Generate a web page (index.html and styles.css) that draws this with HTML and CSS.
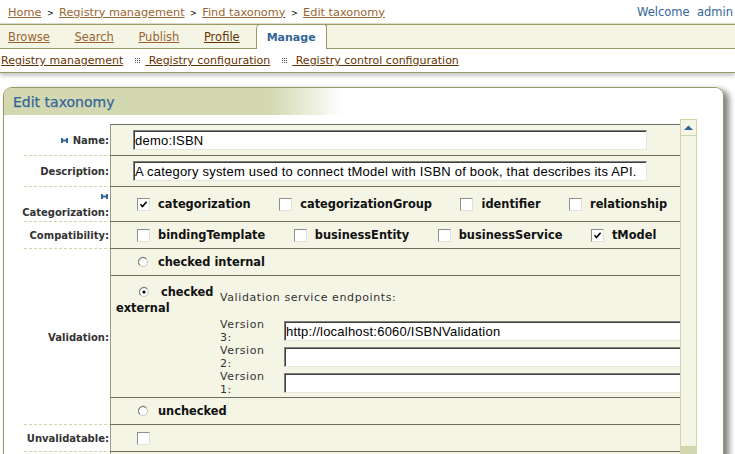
FILE: index.html
```html
<!DOCTYPE html>
<html>
<head>
<meta charset="utf-8">
<title>Edit taxonomy</title>
<link rel="stylesheet" href="styles.css">
</head>
<body>
<div class="top">
  <nav class="crumbs">
    <a href="#">Home</a><span class="sep">&gt;</span><a href="#">Registry management</a><span class="sep">&gt;</span><a href="#">Find taxonomy</a><span class="sep">&gt;</span><a href="#">Edit taxonomy</a>
  </nav>
  <div class="welcome">Welcome&nbsp; admin</div>
</div>

<div class="tabs">
  <a class="tab" href="#">Browse</a>
  <a class="tab" href="#">Search</a>
  <a class="tab" href="#">Publish</a>
  <a class="tab visited" href="#">Profile</a>
  <span class="tab active">Manage</span>
</div>

<div class="subnav">
  <a href="#">Registry management</a>
  <span class="grip"><svg width="5" height="5" viewBox="0 0 5 5"><g fill="#555"><rect x="0" y="0" width="1" height="1"/><rect x="2" y="0" width="1" height="1"/><rect x="4" y="0" width="1" height="1"/><rect x="0" y="2" width="1" height="1"/><rect x="2" y="2" width="1" height="1"/><rect x="4" y="2" width="1" height="1"/><rect x="0" y="4" width="1" height="1"/><rect x="2" y="4" width="1" height="1"/><rect x="4" y="4" width="1" height="1"/></g></svg></span>
  <a href="#">&nbsp;Registry configuration</a>
  <span class="grip"><svg width="5" height="5" viewBox="0 0 5 5"><g fill="#555"><rect x="0" y="0" width="1" height="1"/><rect x="2" y="0" width="1" height="1"/><rect x="4" y="0" width="1" height="1"/><rect x="0" y="2" width="1" height="1"/><rect x="2" y="2" width="1" height="1"/><rect x="4" y="2" width="1" height="1"/><rect x="0" y="4" width="1" height="1"/><rect x="2" y="4" width="1" height="1"/><rect x="4" y="4" width="1" height="1"/></g></svg></span>
  <a href="#">&nbsp;Registry control configuration</a>
</div>

<div class="panel">
  <div class="panel-head">Edit taxonomy</div>
  <div class="panel-body">
    <div class="scroll">
      <div class="form">
        <div class="lbl r1"><svg class="req" width="7" height="5" viewBox="0 0 7 5"><g fill="#336699"><rect x="0" y="0" width="2" height="5"/><rect x="5" y="0" width="2" height="5"/><rect x="0" y="1.5" width="7" height="2"/></g></svg>Name:</div>
        <div class="val r1 first"><input class="inp wide" type="text" value="demo:ISBN"></div>

        <div class="lbl r2">Description:</div>
        <div class="val r2"><input class="inp wide" type="text" value="A category system used to connect tModel with ISBN of book, that describes its API."></div>

        <div class="lbl r3 stack"><span class="req-line"><svg class="req" width="7" height="5" viewBox="0 0 7 5"><g fill="#336699"><rect x="0" y="0" width="2" height="5"/><rect x="5" y="0" width="2" height="5"/><rect x="0" y="1.5" width="7" height="2"/></g></svg></span><span>Categorization:</span></div>
        <div class="val r3 opts">
          <span class="opt"><span class="cb"><svg width="11" height="11" viewBox="0 0 11 11"><path d="M2.5 5.2 L4.5 7.5 L8.6 2.8" fill="none" stroke="#000" stroke-width="1.6"/></svg></span>categorization</span>
          <span class="opt"><span class="cb"></span>categorizationGroup</span>
          <span class="opt"><span class="cb"></span>identifier</span>
          <span class="opt"><span class="cb"></span>relationship</span>
        </div>

        <div class="lbl r4">Compatibility:</div>
        <div class="val r4 opts">
          <span class="opt"><span class="cb"></span>bindingTemplate</span>
          <span class="opt"><span class="cb"></span>businessEntity</span>
          <span class="opt"><span class="cb"></span>businessService</span>
          <span class="opt"><span class="cb"><svg width="11" height="11" viewBox="0 0 11 11"><path d="M2.5 5.2 L4.5 7.5 L8.6 2.8" fill="none" stroke="#000" stroke-width="1.6"/></svg></span>tModel</span>
        </div>

        <div class="lbl r5-7">Validation:</div>
        <div class="val r5 radios">
          <span class="opt"><svg class="radio" width="12" height="12" viewBox="0 0 12 12"><circle cx="6" cy="6" r="4.5" fill="#fff" stroke="#c4c4bc"/><path d="M2.8 9.2 A4.5 4.5 0 0 1 9.2 2.8" fill="none" stroke="#7c7c7c" stroke-width="1.2"/></svg>checked internal</span>
        </div>
        <div class="val r6 ext">
          <div class="ext-opt"><svg class="radio inl" width="12" height="12" viewBox="0 0 12 12"><circle cx="6" cy="6" r="4.5" fill="#fff" stroke="#c4c4bc"/><path d="M2.8 9.2 A4.5 4.5 0 0 1 9.2 2.8" fill="none" stroke="#7c7c7c" stroke-width="1.2"/><circle cx="6" cy="6" r="1.6" fill="#000"/></svg>checked external</div>
          <div class="endpoints">
            <div class="ep-title">Validation service endpoints:</div>
            <div class="ep-grid">
              <span class="ep-lbl">Version 3:</span><input class="inp ep" type="text" value="http://localhost:6060/ISBNValidation">
              <span class="ep-lbl">Version 2:</span><input class="inp ep" type="text" value="">
              <span class="ep-lbl">Version 1:</span><input class="inp ep" type="text" value="">
            </div>
          </div>
        </div>
        <div class="val r7 radios">
          <span class="opt"><svg class="radio" width="12" height="12" viewBox="0 0 12 12"><circle cx="6" cy="6" r="4.5" fill="#fff" stroke="#c4c4bc"/><path d="M2.8 9.2 A4.5 4.5 0 0 1 9.2 2.8" fill="none" stroke="#7c7c7c" stroke-width="1.2"/></svg>unchecked</span>
        </div>

        <div class="lbl r8">Unvalidatable:</div>
        <div class="val r8 opts"><span class="cb"></span></div>

        <div class="lbl r9"></div>
        <div class="val r9"></div>
      </div>
    </div>
    <div class="scrollbar">
      <div class="sb-up"><svg width="9" height="5" viewBox="0 0 9 5"><path d="M0 5 L4.5 0.5 L9 5 Z" fill="#336699"/></svg></div>
      <div class="sb-track"></div>
      <div class="sb-down"></div>
    </div>
  </div>
</div>
</body>
</html>
```

FILE: styles.css
```css
html, body {
  margin: 0;
  padding: 0;
  overflow: hidden;
  background: #fff;
}

body {
  width: 735px;
  height: 454px;
  font-family: "DejaVu Sans", Verdana, sans-serif;
  color: #000;
}

a {
  color: #996633;
  text-decoration: underline;
}

/* ---- top breadcrumb ---- */
.top {
  height: 24px;
  display: flex;
  justify-content: space-between;
  align-items: center;
  padding: 0 2px 0 8px;
  font-size: 11.3px;
}

.sep {
  color: #000;
  font-size: 8px;
  margin: 0 5.5px;
}

.welcome {
  font-size: 11.5px;
  color: #336699;
}

/* ---- tabs ---- */
.tabs {
  height: 23px;
  display: flex;
  align-items: stretch;
  gap: 24.5px;
  padding-left: 8px;
  background: #f5f5e6;
  border-top: 1px solid #999966;
  border-bottom: 1px solid #999966;
  box-shadow: 0 -1px 0 #dcdccc;
  font-size: 11.5px;
}

.tab {
  display: flex;
  align-items: center;
}

.tab.visited {
  color: #663300;
}

.tab.active {
  margin: -1px 0 -1px -8.5px;
  padding: 0 10px;
  background: #fff;
  border: 1px solid #999966;
  border-bottom: none;
  border-radius: 5px 3px 0 0;
  font-size: 11px;
  font-weight: bold;
  color: #336699;
}

/* ---- sub navigation ---- */
.subnav {
  height: 23px;
  display: flex;
  align-items: center;
  padding-left: 1px;
  font-size: 11px;
  border-bottom: 1px solid #999966;
  box-shadow: 0 3px 4px rgba(0, 0, 0, 0.22);
}

.subnav a {
  color: #663300;
}

.grip {
  display: inline-flex;
  margin: 0 5px 0 12px;
}

/* ---- panel ---- */
.panel {
  margin: 14px 0 0 3px;
  width: 721px;
  height: 380px;
  box-sizing: border-box;
  border: 1px solid #999966;
  border-bottom: none;
  border-radius: 9px 9px 0 0;
  box-shadow: 5px 3px 6px rgba(0, 0, 0, 0.5);
  overflow: hidden;
  background: #fff;
}

.panel-head {
  height: 27px;
  display: flex;
  align-items: center;
  padding-left: 9px;
  font-size: 14px;
  color: #336699;
  -webkit-text-stroke: 0.25px #336699;
  background: linear-gradient(to right, #d3d8b0 265px, #ffffff 340px);
}

.panel-body {
  display: flex;
  align-items: flex-start;
  padding-top: 4px;
}

.scroll {
  width: 676px;
  overflow: hidden;
  padding-top: 5px;
}

/* ---- scrollbar ---- */
.scrollbar {
  width: 17px;
  display: flex;
  flex-direction: column;
}

.sb-up {
  height: 17px;
  box-sizing: border-box;
  border: 1px solid #cfd4aa;
  background: #f5f5e6;
  display: flex;
  align-items: center;
  justify-content: center;
}

.sb-track {
  height: 311px;
  box-sizing: border-box;
  border: 1px solid #cfd4aa;
  border-top: none;
  background: #f5f5e6;
}

.sb-down {
  height: 20px;
  background: #d3d8b0;
}

/* ---- form ---- */
.form {
  display: grid;
  grid-template-columns: 20px 86px 570px;
  grid-template-rows: 32px 31px 35px 27px 27px 122px 27px 27px 27px;
}

.lbl {
  grid-column: 2;
  display: flex;
  align-items: center;
  justify-content: flex-end;
  padding-right: 1px;
  white-space: nowrap;
  font-size: 10px;
  font-weight: bold;
  color: #333;
  background: repeating-linear-gradient(to right, #d2d2ac 0 3px, transparent 3px 5px) left bottom / 100% 1px no-repeat;
}

.lbl.stack {
  flex-direction: column;
  align-items: flex-end;
  justify-content: center;
  line-height: 16px;
}

.req-line {
  display: flex;
  align-items: center;
  height: 16px;
  margin-right: 1px;
}

.req {
  margin-right: 5px;
}

.req-line .req {
  margin-right: 0;
}

.val {
  grid-column: 3;
  box-sizing: border-box;
  display: flex;
  align-items: center;
  padding-left: 22px;
  overflow: hidden;
  background: #f5f5e6;
  border-left: 1px solid #9a9a88;
  border-bottom: 1px solid #6f6f60;
}

.val.first {
  border-top: 1px solid #6f6f60;
}

.r1 { grid-row: 1; }
.r2 { grid-row: 2; }
.r3 { grid-row: 3; }
.r4 { grid-row: 4; }
.r5 { grid-row: 5; }
.r5-7 { grid-row: 5 / span 3; }
.r6 { grid-row: 6; }
.r7 { grid-row: 7; }
.r8 { grid-row: 8; }
.r9 { grid-row: 9; }

/* text inputs */
.inp {
  box-sizing: border-box;
  height: 20px;
  margin: 0;
  padding: 0 1px;
  border: 1px solid;
  border-color: #808080 #e6e6dc #e6e6dc #808080;
  box-shadow: inset 1px 1px 0 #404040;
  background: #fff;
  font-family: "Liberation Sans", Arial, sans-serif;
  font-size: 13px;
  letter-spacing: 0.22px;
  color: #000;
  outline: none;
}

.inp.wide {
  width: 514px;
}

.inp.ep {
  width: 420px;
}

/* checkbox / radio options */
.opts {
  padding-left: 26px;
  column-gap: 28.5px;
}

.radios {
  padding-left: 26px;
}

.opt {
  display: inline-flex;
  align-items: center;
  gap: 8px;
  white-space: nowrap;
  font-size: 11.4px;
  font-weight: bold;
  color: #111;
}

.radios .opt {
  gap: 9px;
}

.cb {
  box-sizing: border-box;
  width: 13px;
  height: 13px;
  flex: none;
  display: flex;
  align-items: center;
  justify-content: center;
  background: #fff;
  border: 1px solid;
  border-color: #8e8e8e #e2e2da #e2e2da #8e8e8e;
}

.radio {
  flex: none;
  display: block;
}

/* checked external row */
.val.ext {
  align-items: flex-start;
  padding-left: 0;
}

.ext-opt {
  width: 107px;
  flex: none;
  box-sizing: border-box;
  padding: 8px 0 0 5px;
  text-indent: 22px;
  line-height: 16px;
  font-size: 11.4px;
  font-weight: bold;
  color: #111;
}

.radio.inl {
  display: inline-block;
  vertical-align: -2px;
  margin-right: 11px;
}

.endpoints {
  margin-left: 2px;
  padding-top: 14px;
  font-size: 11px;
  letter-spacing: 0.6px;
  color: #333;
}

.ep-title {
  line-height: 16px;
  margin-bottom: 12px;
  white-space: nowrap;
}

.ep-grid {
  display: grid;
  grid-template-columns: 52px 420px;
  column-gap: 12px;
  grid-auto-rows: 26px;
  align-items: center;
}

.ep-lbl {
  line-height: 13px;
}
```
